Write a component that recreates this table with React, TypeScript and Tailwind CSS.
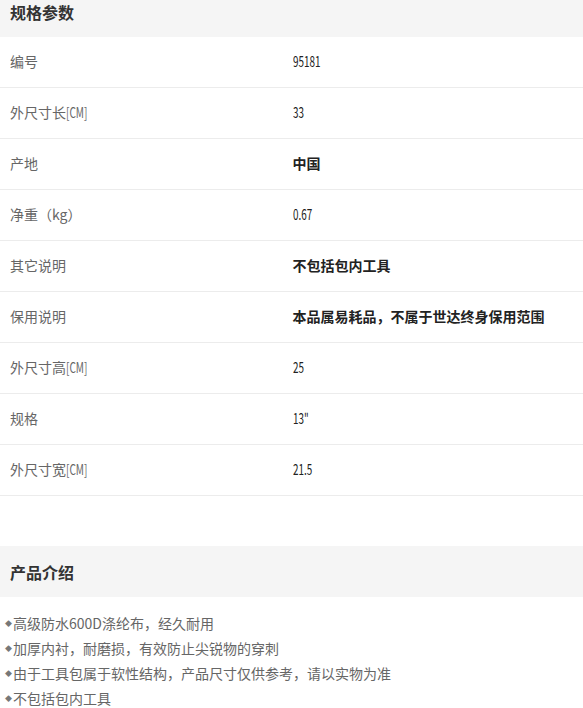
const specs: { label: string; unit?: string; value: string; bold?: boolean }[] = [
  { label: "编号", value: "95181" },
  { label: "外尺寸长", unit: "[CM]", value: "33" },
  { label: "产地", value: "中国", bold: true },
  { label: "净重（kg）", value: "0.67" },
  { label: "其它说明", value: "不包括包内工具", bold: true },
  { label: "保用说明", value: "本品属易耗品，不属于世达终身保用范围", bold: true },
  { label: "外尺寸高", unit: "[CM]", value: "25" },
  { label: "规格", value: "13\"" },
  { label: "外尺寸宽", unit: "[CM]", value: "21.5" },
];

const intro = [
  "高级防水600D涤纶布，经久耐用",
  "加厚内衬，耐磨损，有效防止尖锐物的穿刺",
  "由于工具包属于软性结构，产品尺寸仅供参考，请以实物为准",
  "不包括包内工具",
];

export default function App() {
  return (
    <div
      className="w-[583px] h-[708px] overflow-hidden bg-white text-[#333]"
      style={{ fontFamily: '"Noto Sans CJK SC", "Noto Sans", sans-serif' }}
    >
      {/* 规格参数 */}
      <div className="-mt-[14px] h-[51px] bg-[#f5f5f5] flex items-center px-[10px]">
        <h2 className="text-[16px] font-bold text-[#333]">规格参数</h2>
      </div>
      <div>
        {specs.map((s) => (
          <div key={s.label + s.value} className="h-[51px] flex items-center border-b border-[#ececec] pb-[1px]">
            <div className="w-1/2 pl-[10px] text-[14px] text-[#666] flex items-center">
              {s.label}
              {s.unit && (
                <span className="inline-block origin-left scale-x-[0.72] w-[22px]">{s.unit}</span>
              )}
            </div>
            <div className="w-1/2 pl-[1px] text-[14px] text-[#222]">
              {s.bold ? (
                <span className="font-bold">{s.value}</span>
              ) : (
                <span className="inline-block origin-left scale-x-[0.66] text-[15px]">{s.value}</span>
              )}
            </div>
          </div>
        ))}
      </div>
      <div className="h-[50px]" />

      {/* 产品介绍 */}
      <div className="h-[51px] bg-[#f5f5f5] flex items-center px-[10px]">
        <h2 className="text-[16px] font-bold text-[#333]">产品介绍</h2>
      </div>
      <ul className="pt-[14px] px-[5px] text-[14px] text-[#666]">
        {intro.map((t) => (
          <li key={t} className="h-[25px] flex items-center">
            <span className="text-[7px] text-[#777] mr-[1px]">◆</span>
            {t}
          </li>
        ))}
      </ul>
    </div>
  );
}
